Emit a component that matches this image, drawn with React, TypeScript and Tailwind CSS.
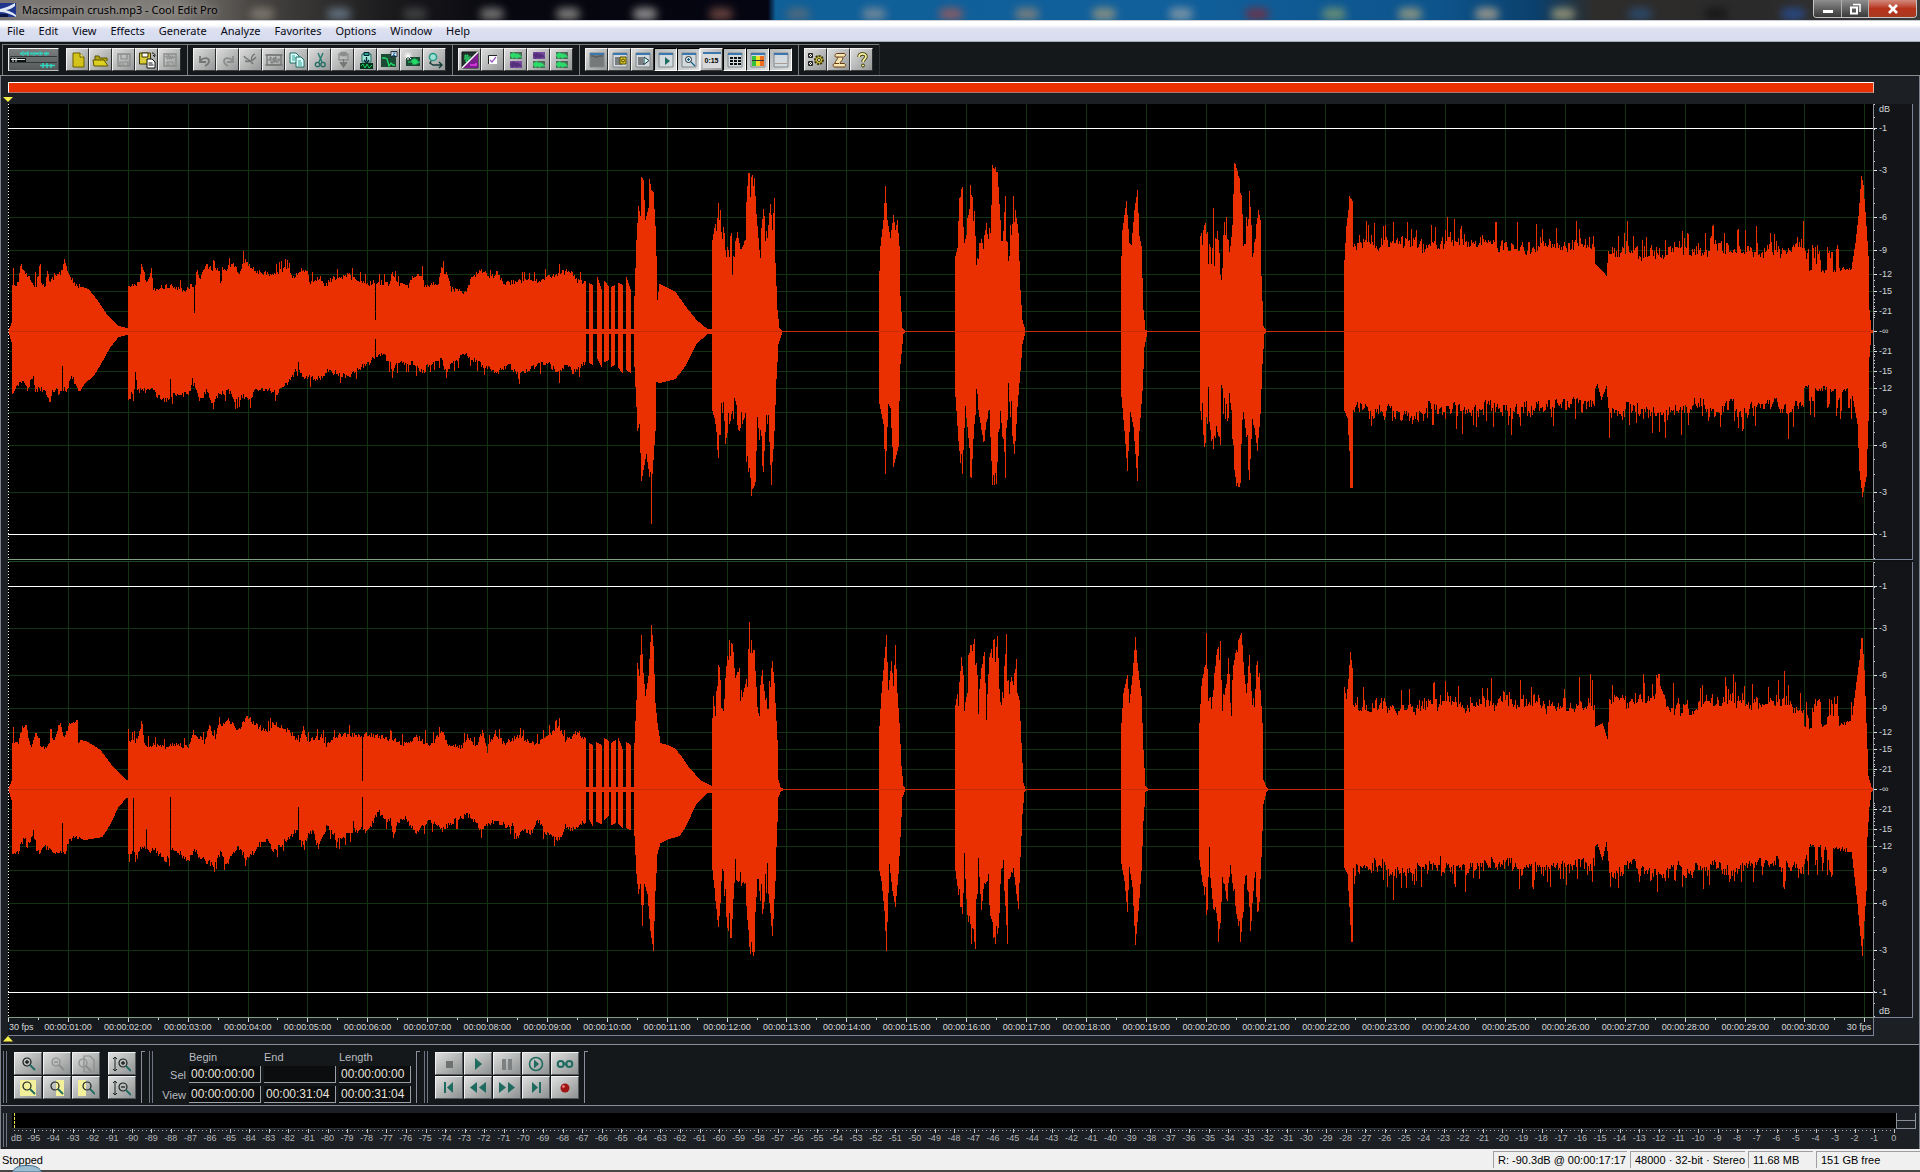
import React from "react";

/* ---------- waveform data: "x,amplitude" pairs, x on a 1920-wide timeline ---------- */

const L_UP = `8,0 11,8 12,46 13,63 14,46 18,48 20,66 24,62 30,50 34,46 35,62 36,46 40,68 41,45 45,43 47,63 49,50 51,52 57,58 62,60 64,72 67,62 69,53 78,45 88,42 96,32 106,17 118,5 126,3 127,3 128,45 139,50 141,67 143,62 146,48 151,62 153,43 169,47 184,42 192,47 193,45 194,18 195,45 196,63 200,55 206,67 212,63 219,62 220,50 224,63 233,67 240,60 243,72 249,66 259,60 273,58 286,64 293,55 302,62 306,63 310,50 320,55 324,45 331,53 347,57 367,48 374,50 375,11 376,50 389,48 391,59 398,47 408,47 412,55 422,57 424,45 438,50 441,65 445,60 451,43 465,40 471,55 484,62 490,53 496,60 504,47 518,52 531,50 547,55 569,62 577,52 585,50 586,2 588,2 589,48 592,46 593,2 596,2 597,54 601,42 602,2 603,2 604,50 608,45 609,2 610,2 611,44 614,46 615,2 617,2 618,48 622,46 623,2 625,2 626,54 630,42 631,2 633,2 634,35 636,91 638,125 640,115 641,154 643,151 645,111 648,123 649,152 651,141 653,139 655,105 656,75 657,31 659,47 667,43 675,39 685,25 696,11 707,2 711,2 712,91 715,108 716,100 718,128 721,120 725,91 729,78 731,113 732,60 734,88 737,101 741,81 745,92 746,131 748,159 754,156 756,115 759,85 763,123 767,95 770,130 772,103 774,133 775,68 777,21 779,3 782,0 878,0 879,60 880,85 883,111 885,145 887,111 890,93 893,116 895,101 897,111 899,85 900,35 902,3 905,0 954,0 955,75 957,83 959,135 962,145 965,95 970,146 974,121 976,66 980,98 983,85 985,113 988,95 991,126 992,167 997,160 1000,111 1003,101 1005,135 1008,71 1010,105 1013,136 1015,125 1018,98 1020,41 1022,11 1025,0 1120,0 1121,75 1122,101 1126,130 1129,88 1131,86 1134,121 1137,141 1139,95 1141,85 1143,21 1145,1 1147,0 1199,0 1200,95 1203,105 1206,116 1208,86 1211,86 1213,125 1214,88 1217,111 1220,60 1224,108 1226,113 1229,78 1232,108 1234,169 1238,158 1241,151 1243,85 1246,115 1249,138 1252,93 1255,103 1258,121 1260,111 1261,55 1263,5 1266,0 1343,0 1344,71 1346,105 1348,121 1349,135 1352,130 1353,84 1594,84 1595,67 1602,60 1606,55 1608,80 1803,82 1804,58 1851,62 1855,88 1858,115 1861,155 1863,146 1866,105 1868,75 1869,21 1871,1 1873,0`;

const L_DN = `8,0 11,10 12,62 18,53 24,48 27,58 33,43 35,58 45,58 49,72 53,57 59,61 61,60 62,33 63,57 67,60 71,42 78,62 84,52 94,43 100,33 110,15 118,5 126,3 127,3 128,68 134,60 135,42 137,58 141,61 151,58 157,65 165,70 169,66 170,48 171,64 180,62 188,65 192,50 200,70 206,60 213,75 218,62 231,61 233,70 245,65 250,68 255,60 269,58 276,62 286,53 294,42 298,34 302,48 310,47 322,48 327,40 347,45 359,37 369,32 374,27 375,7 376,27 382,22 391,35 392,47 394,35 398,32 412,32 422,42 429,33 441,27 446,45 451,33 465,23 478,32 498,42 508,33 518,45 531,37 547,32 559,43 565,32 573,42 584,33 585,30 586,2 588,2 589,31 592,33 593,2 596,2 597,27 601,35 602,2 603,2 604,30 608,28 609,2 610,2 611,35 614,33 615,2 617,2 618,36 622,41 623,2 625,2 626,38 630,41 631,2 633,2 634,35 636,75 637,99 639,92 641,149 646,122 649,145 650,140 651,192 652,142 655,99 656,50 660,51 675,47 685,34 696,12 707,2 711,2 712,79 715,92 718,129 723,69 725,112 729,92 732,82 736,95 741,100 745,82 746,132 751,162 755,152 757,85 760,122 763,139 766,82 769,112 771,151 774,99 776,47 778,12 782,0 878,0 879,72 883,92 885,142 888,72 890,76 893,135 898,115 899,69 900,32 903,2 905,0 954,0 955,65 959,122 962,145 965,73 968,108 970,165 973,109 976,70 979,84 983,112 985,113 989,82 992,154 996,150 1000,79 1005,144 1008,64 1014,125 1017,75 1020,39 1022,12 1025,0 1120,0 1121,65 1124,99 1127,139 1130,80 1133,95 1137,149 1139,99 1142,59 1144,15 1147,0 1199,0 1200,79 1205,124 1208,79 1213,129 1216,92 1220,122 1221,75 1227,92 1230,75 1233,122 1235,154 1240,154 1243,79 1246,108 1249,152 1252,85 1257,120 1260,82 1262,32 1264,2 1266,0 1343,0 1344,79 1347,86 1349,119 1350,156 1352,156 1353,78 1594,74 1595,56 1597,52 1601,68 1606,54 1608,76 1803,76 1804,55 1851,58 1857,92 1859,139 1862,165 1866,145 1868,89 1869,25 1871,1 1873,0`;

const R_UP = `8,0 11,8 12,46 13,62 14,46 18,44 22,63 25,65 31,43 36,58 41,43 49,43 50,62 53,49 60,66 63,51 69,63 77,68 78,49 86,48 100,39 112,23 126,9 127,9 128,60 129,48 137,51 141,68 143,46 155,44 163,42 171,46 188,43 193,59 200,51 204,48 209,67 214,51 218,63 229,70 237,59 247,73 255,66 267,58 273,68 286,61 294,54 298,46 303,64 307,49 322,54 325,44 339,56 355,56 361,55 362,8 363,55 367,56 384,53 404,46 416,53 424,48 425,62 426,47 429,46 443,58 447,46 461,43 467,54 475,43 482,59 486,46 487,36 488,44 495,58 504,46 518,54 535,46 559,63 565,49 577,58 585,51 586,2 588,2 589,46 592,44 593,2 595,2 596,47 601,44 602,2 603,2 604,51 608,48 609,2 610,2 611,46 615,49 616,2 617,2 618,51 622,40 623,2 625,2 626,47 630,44 631,2 633,2 634,46 636,89 637,126 639,113 641,154 643,116 645,93 648,113 651,164 653,143 655,86 657,66 660,46 667,44 675,40 680,34 689,21 700,9 711,3 712,71 713,93 715,74 717,124 719,124 722,79 725,113 727,136 730,154 733,139 735,111 739,121 742,93 747,118 749,167 750,148 754,148 757,83 762,118 765,89 769,106 771,141 774,106 775,86 777,49 778,9 780,2 783,0 878,0 879,63 881,96 883,119 886,154 888,99 891,128 893,103 895,144 897,96 899,66 901,23 903,3 905,0 954,0 955,84 959,106 962,144 964,81 967,99 968,133 970,146 974,149 977,113 978,91 981,123 984,138 986,78 989,133 993,149 997,156 1000,89 1003,106 1006,155 1008,109 1012,111 1016,128 1017,96 1019,89 1021,46 1023,6 1025,0 1120,0 1121,66 1123,96 1127,114 1129,86 1132,113 1135,152 1137,126 1139,109 1141,93 1143,39 1145,3 1148,0 1198,0 1199,66 1201,103 1204,123 1206,157 1208,89 1211,96 1214,116 1217,141 1220,151 1222,89 1226,106 1228,131 1231,93 1233,123 1237,149 1241,156 1244,116 1246,98 1249,134 1252,86 1255,103 1257,149 1260,99 1262,66 1263,9 1266,2 1268,0 1343,0 1344,102 1346,90 1348,110 1350,137 1352,121 1353,84 1589,84 1590,118 1591,86 1594,84 1595,62 1602,66 1607,50 1609,84 1655,88 1656,115 1660,104 1664,100 1667,84 1790,86 1803,78 1804,61 1851,66 1855,99 1859,129 1861,151 1862,151 1864,119 1866,66 1868,13 1871,2 1873,0`;

const R_DN = `8,0 11,10 12,64 18,61 24,47 27,58 33,42 37,64 47,56 53,64 61,62 62,36 63,62 65,62 69,51 77,47 84,50 102,47 110,34 118,17 126,8 127,8 128,64 129,72 132,60 133,8 134,62 135,72 137,61 145,60 146,38 147,62 155,62 165,72 169,68 170,7 171,60 176,62 188,72 194,61 200,69 213,76 220,64 226,76 237,57 247,71 259,56 267,51 273,64 282,54 294,44 297,42 298,17 299,50 301,56 312,42 318,59 327,36 337,52 352,43 353,32 355,42 361,40 362,7 363,40 367,44 378,22 384,32 390,31 393,49 398,32 404,29 416,44 429,32 443,41 449,34 469,26 480,41 494,32 506,37 513,36 516,51 522,41 531,44 537,31 545,44 559,51 565,37 571,41 585,33 586,2 588,2 589,30 592,36 593,2 595,2 596,32 601,34 602,2 603,2 604,30 608,26 609,2 610,2 611,35 615,33 616,2 617,2 618,34 622,38 623,2 625,2 626,38 630,40 631,2 633,2 634,46 636,84 638,104 640,94 642,136 644,94 647,104 650,141 653,161 655,101 657,64 660,53 669,49 679,46 685,37 696,14 707,3 711,3 712,80 718,141 722,91 727,137 731,150 734,91 739,94 745,97 749,166 754,164 757,91 762,124 767,97 772,146 775,91 776,57 778,7 780,2 783,0 878,0 879,81 881,91 884,121 886,161 889,74 892,101 895,117 898,84 900,47 902,7 905,0 954,0 955,81 959,111 962,132 964,74 967,127 970,151 975,157 978,77 982,132 985,94 987,91 991,141 995,153 998,141 1002,81 1004,101 1007,157 1008,91 1013,81 1018,119 1020,67 1022,24 1024,2 1026,0 1120,0 1121,74 1124,91 1127,122 1129,77 1132,97 1135,155 1138,121 1141,81 1143,31 1145,2 1148,0 1198,0 1199,70 1200,77 1204,107 1206,139 1209,81 1212,111 1216,137 1219,159 1222,87 1227,114 1230,77 1236,124 1240,153 1244,111 1246,84 1250,144 1254,87 1258,134 1261,67 1263,14 1266,2 1268,0 1343,0 1344,78 1347,84 1349,117 1351,152 1352,152 1353,78 1594,76 1595,56 1597,54 1602,70 1606,52 1609,80 1803,76 1804,55 1851,60 1857,114 1859,136 1862,166 1864,131 1866,101 1867,47 1869,17 1871,2 1873,0`;

const X0 = 8;
const WIDTH = 1865;
const HEIGHT = 455;
const MID = 227;

function parse(src: string): number[][] {
  return src.split(" ").map((p) => p.split(",").map(Number));
}

function hash(n: number): number {
  const s = Math.sin(n * 127.1 + 311.7) * 43758.5453;
  return s - Math.floor(s);
}

function jitter(x: number, seed: number): number {
  const r = hash(x + seed * 977);
  const r2 = hash(Math.floor(x / 3) + seed * 431);
  const r3 = hash(Math.floor(x / 14) + seed * 89);
  if (x > 14 && x < 80) return r * 6 - 3;
  if (x > 129 && x < 584) return r * 6 - 4 + (r > 0.93 ? 6 : 0);
  if ((x > 713 && x < 774) || (x > 957 && x < 1017) || (x > 1201 && x < 1259)) {
    return r > 0.72 ? -8 - r2 * 18 : r * 8 - 4;
  }
  if ((x > 1353 && x < 1594) || (x > 1608 && x < 1803)) {
    return r * r * 14 - 12 + r2 * 9 + r3 * 10 + (r > 0.9 ? 8 : 0) + (r > 0.985 ? 6 : 0);
  }
  if (x >= 1803 && x < 1852) return r2 > 0.4 ? 8 + r * 22 : r * 5 - 2;
  return 0;
}

function columns(src: string, seed: number): number[] {
  const pts = parse(src);
  const out: number[] = [];
  let k = 0;
  for (let x = X0; x < X0 + WIDTH; x++) {
    while (k < pts.length - 2 && pts[k + 1][0] <= x) k++;
    const [xa, a] = pts[k];
    const [xb, b] = pts[k + 1];
    const base = a + ((b - a) * (x - xa)) / (xb - xa);
    const noisy = base < 20 ? base : base + jitter(x, seed);
    out.push(Math.max(0, Math.round(noisy)));
  }
  return out;
}

function wavePath(up: string, dn: string, seed: number): string {
  const u = columns(up, seed);
  const d = columns(dn, seed + 1);
  let path = `M0 ${MID}`;
  u.forEach((v, i) => {
    path += `V${MID - v}H${i + 1}`;
  });
  for (let i = d.length - 1; i >= 0; i--) path += `V${MID + 1 + d[i]}H${i}`;
  return path + "Z";
}

const LEFT_PATH = wavePath(L_UP, L_DN, 3);
const RIGHT_PATH = wavePath(R_UP, R_DN, 11);

const SECOND = 59.88;
const SECONDS = Array.from({ length: 31 }, (_, i) => i + 1);
const LEVELS: [string, number][] = [
  ["-1", 203],
  ["-3", 161],
  ["-6", 114],
  ["-9", 81],
  ["-12", 57],
  ["-15", 40],
  ["-21", 20],
];

function Channel({ path, name }: { path: string; name: string }) {
  return (
    <svg
      role="img"
      aria-label={name}
      viewBox={`0 0 ${WIDTH} ${HEIGHT}`}
      preserveAspectRatio="none"
      className="block h-0 w-full min-h-0 flex-1 bg-black"
      shapeRendering="crispEdges"
    >
      {SECONDS.map((s) => (
        <rect key={s} x={Math.round(s * SECOND)} y={0} width={1} height={HEIGHT} fill="#123312" />
      ))}
      {LEVELS.slice(1).map(([l, a]) => (
        <g key={l} fill="#123312">
          <rect x={0} y={MID - a} width={WIDTH} height={1} />
          <rect x={0} y={MID + a} width={WIDTH} height={1} />
        </g>
      ))}
      <rect x={0} y={MID - 203} width={WIDTH} height={1} fill="#fff" />
      <rect x={0} y={MID + 203} width={WIDTH} height={1} fill="#fff" />
      <path d={path} fill="#ea2f00" />
      <rect x={0} y={MID} width={WIDTH} height={1} fill="#c62c06" />
      <path d={`M0 0V${HEIGHT}`} stroke="#fff" strokeWidth={2} strokeDasharray="1 2" />
    </svg>
  );
}

function minorTicks(): number[] {
  const out: number[] = [];
  for (let d = 0; d <= 24; d += d < 3 ? 0.5 : 1) out.push(Math.round(Math.pow(10, -d / 20) * 227));
  return out;
}
const MINOR = minorTicks();

function Scale({ db }: { db: "top" | "bottom" }) {
  const marks: [string, number][] = [["-∞", MID]];
  LEVELS.forEach(([l, a]) => marks.push([l, MID - a], [l, MID + a]));
  marks.push(["dB", db === "top" ? 5 : HEIGHT - 6]);
  return (
    <div className="relative min-h-0 flex-1 border-r border-[#7c8398] bg-[#121418]">
      <svg
        viewBox={`0 0 6 ${HEIGHT}`}
        preserveAspectRatio="none"
        className="absolute inset-y-0 left-0 h-full w-[6px]"
        shapeRendering="crispEdges"
        aria-hidden="true"
      >
        <rect width={1} height={HEIGHT} fill="#8b909a" />
        {MINOR.map((m, i) => (
          <g key={i} fill="#cfd2d6">
            <rect x={1} y={MID - m} width={1} height={1} />
            <rect x={1} y={Math.min(HEIGHT - 1, MID + m)} width={1} height={1} />
          </g>
        ))}
        {marks
          .filter(([l]) => l !== "dB")
          .map(([l, y]) => (
            <rect key={l + y} x={1} y={y} width={3} height={1} fill="#e4e6e8" />
          ))}
      </svg>
      {marks.map(([l, y]) => (
        <span
          key={l + y}
          className="absolute left-[6px] -translate-y-1/2 text-[9px] leading-[10px] text-[#d4d6d8]"
          style={{ top: `${(y / HEIGHT) * 100}%` }}
        >
          {l}
        </span>
      ))}
    </div>
  );
}

/* ---------- icons ---------- */

const G = "#8b8d8c";
const T = "#1f6b60";
const svg16 = { width: 18, height: 18, viewBox: "0 0 18 18", fill: "none", "aria-hidden": true } as const;

const wave = (c: string, y: number) => (
  <path d={`M3 ${y}h1v-2h1v4h1v-5h1v4h1v-3h1v4h1v-4h1v3h1v-2h1v2h2`} stroke={c} strokeWidth={1.2} />
);

function Win({ children, body = "#d3dbe0" }: { children?: React.ReactNode; body?: string }) {
  return (
    <>
      <path d="M2 2h14v14H2z" fill={body} stroke="#7f8488" />
      <path d="M2 2h14v2H2z" fill="#3c78ae" />
      {children}
    </>
  );
}

const I: Record<string, React.ReactNode> = {
  newFile: (
    <>
      <path d="M4 2h7l4 4v10H4z" fill="#d4c31a" stroke="#6b5f00" />
      <path d="M11 2v4h4" fill="#f5ef8e" stroke="#6b5f00" />
    </>
  ),
  open: (
    <>
      <path d="M3 14V5h4l1 2h7v3" fill="#b0a210" stroke="#5c5200" />
      <path d="M2 15l-1-6h11l4 6z" fill="#ded022" stroke="#5c5200" />
    </>
  ),
  save: (
    <>
      <path d="M3 3h12v12H3z" stroke={G} strokeWidth={1.4} />
      <path d="M6 3v5h6V3M5 15v-4h8v4M8 12v3" stroke={G} strokeWidth={1.2} />
    </>
  ),
  saveAs: (
    <>
      <path d="M1.5 2h11v11h-11z" fill="#d8cc3a" stroke="#3a3500" />
      <path d="M4 2h6v4H4z" fill="#fff" stroke="#3a3500" />
      <path d="M9 8h5l3 3v6H9z" fill="#fff" stroke="#111" />
      <path d="M10.5 12h4M10.500 14h5M14 2c2 0 3 1 3 3m-2-1l2 2" stroke="#111" />
    </>
  ),
  saveAll: (
    <>
      <path d="M3 3h12v12H3z" stroke={G} strokeWidth={1.4} />
      <path d="M4 6h1V5h1v3h1V4h1v4h1V5h1v3h1V5h1v2h1V6h1M6 15v-4h6v4M8 12v2" stroke={G} />
    </>
  ),
  undo: <path d="M4 5v6h6M4 11c2-5 9-5 9-1 0 2-2 4-4 5" stroke="#747676" strokeWidth={1.8} />,
  redo: <path d="M14 5v6H8M14 11c-2-5-9-5-9-1 0 2 2 4 4 5" stroke="#8b8d8d" strokeWidth={1.8} />,
  cutOff: <path d="M2 5c2 4 5 2 9 8m3-7c-4 5-8 5-11 4M13 3c-3 1-4 4-3 7" stroke="#777" strokeWidth={1.5} />,
  trim: (
    <>
      <path d="M2 4h14v10H2z" stroke="#777" strokeWidth={1.4} />
      <path d="M3 9h2V6h1v6h2V7h1v4h1V6h1v5h2V8h1v1h1M0 4h18M0 14h18" stroke="#777" />
    </>
  ),
  copy: (
    <>
      <path d="M2 2h6l3 3v7H2z" fill="#dff" stroke={T} />
      <path d="M8 6h5l3 3v7H8z" fill="#dff" stroke={T} />
      <path d="M4 5h3M4 7h4M4 9h3M10 10h3M10 12h4M10 14h4" stroke="#28a08c" />
    </>
  ),
  cut: (
    <>
      <path d="M7 2l4 9M12 2L8 11" stroke="#207a6c" strokeWidth={1.4} />
      <circle cx={6.5} cy={13.5} r={2.2} stroke={T} strokeWidth={1.3} />
      <circle cx={12} cy={13.5} r={2.2} stroke={T} strokeWidth={1.3} />
    </>
  ),
  pasteOff: (
    <>
      <path d="M5 3h9v6H5zM7 1.500h5v3H7z" stroke={G} strokeWidth={1.3} />
      <path d="M9.500 8v4M6 11.500h7l-3.500 5z" fill="#777" stroke="#777" />
    </>
  ),
  pasteNew: (
    <>
      <path d="M5 3h9v8H5z" fill="#9fe8d8" stroke={T} />
      <path d="M7 1.500h5v3H7z" fill="#28a08c" stroke="#023" />
      <path d="M9.500 6v4M7 9l2.500 3L12 9" stroke="#023" strokeWidth={1.3} />
      <path d="M3 12h13v6H3z" fill="#04331c" />
      <path d="M4 15l2-2 2 4 2-4 2 4 3-3" stroke="#19d25f" />
    </>
  ),
  clip: (
    <>
      <path d="M1 3h15v13H1z" fill="#1c4a34" />
      <path d="M2 7h3l2 1 2 7 2-3 2 2h2" stroke="#23dc68" strokeWidth={1.3} />
      <path d="M11 0.500h6v5h-6z" fill="#fff" stroke="#234" />
      <path d="M12.500 2h3l-3 2.500h3" stroke="#16609a" />
    </>
  ),
  sparkle: (
    <>
      <path d="M3 6h14v9H3z" fill="#1c4a34" />
      <path d="M5 11h4v-2h1v4h1V8h1v5h1v-4h1v3h1v-1h2" stroke="#23dc68" strokeWidth={1.2} />
      <path d="M5 1v8M1 5h8M2 2l6 6M8 2L2 8" stroke="#fff" />
    </>
  ),
  find: (
    <>
      <circle cx={7} cy={6} r={3.6} fill="#9fe0d4" stroke="#219784" strokeWidth={1.5} />
      <path d="M5 10l-1 2 3 2h9m-3-3l3 3-3 3" stroke="#143c38" strokeWidth={1.4} />
    </>
  ),
  split: (
    <>
      <path d="M1 1h16v16H1z" fill="#23302c" stroke="#111" />
      <path d="M17 1v16H1z" fill="#7a1c8c" />
      <path d="M3 8h1V4h1v7h1V4h1v5h1V6h2" stroke="#2be06c" />
      <path d="M17 1L1 17" stroke="#fff" strokeWidth={1.4} />
      <path d="M9 14h6v-2" stroke="#e83ce8" strokeWidth={1.5} />
    </>
  ),
  check: (
    <>
      <path d="M5 5h8v8H5z" fill="#fff" />
      <path d="M4.500 13V4.500H13" stroke="#222" />
      <path d="M6 9l2 2 4-5" stroke="#9a5cc0" strokeWidth={1.3} />
    </>
  ),
  chanA: (
    <>
      <path d="M3 1h12v7H3z" fill="#4d6656" />
      <path d="M3 10h12v7H3z" fill="#7a4aa0" />
      {wave("#2bdc6a", 5)}
      {wave("#54307a", 14)}
    </>
  ),
  chanB: (
    <>
      <path d="M3 1h12v7H3z" fill="#7a4aa0" />
      <path d="M3 10h12v7H3z" fill="#4d6656" />
      {wave("#54307a", 5)}
      {wave("#2bdc6a", 14)}
    </>
  ),
  chanC: (
    <>
      <path d="M3 1h12v7H3zM3 10h12v7H3z" fill="#4d6656" />
      {wave("#2bdc6a", 5)}
      {wave("#2bdc6a", 14)}
    </>
  ),
  winBlank: (
    <Win body="#75797a">
      <path d="M3 5h3l1 1h3l1-1h4" stroke="#4c5052" />
    </Win>
  ),
  winCue: (
    <Win>
      <path d="M4 7h5M4 9h5M4 11h5M4 13h7" stroke="#222" />
      <path d="M9 6h6v7H9z" fill="#d9c929" stroke="#554c00" />
      <circle cx={12} cy={9.5} r={1.5} stroke="#554c00" />
    </Win>
  ),
  winList: (
    <Win>
      <path d="M4 7h5M4 9h5M4 11h5M4 13h6" stroke="#222" />
      <path d="M10 6l5 3.500-5 4z" fill="#cfe" stroke="#234" />
    </Win>
  ),
  winPlay: (
    <Win>
      <path d="M8 6l5 4-5 4z" fill={T} />
    </Win>
  ),
  winZoom: (
    <Win>
      <circle cx={8.5} cy={8.5} r={3} fill="#e8f8ff" stroke="#222" />
      <path d="M7 8.500h3M8.500 7v3M11 11l4 4" stroke="#135a80" strokeWidth={1.2} />
    </Win>
  ),
  winMeter: (
    <Win>
      <path d="M4 7h3M8 7h3M12 7h3M4 10h3M8 10h3M12 10h3M4 13h3M8 13h3M12 13h3" stroke="#0c0c0c" strokeWidth={2} />
    </Win>
  ),
  winSpec: (
    <Win>
      <path d="M3 5h4v4H3zM3 10h4v5H3z" fill="#34c23c" />
      <path d="M7 5h4v4H7zM7 10h4v5H7z" fill="#f4e02c" />
      <path d="M11 5h4v4h-4zM11 10h4v5h-4z" fill="#ef6b22" />
      <path d="M3 9.500h12" stroke="#333" />
    </Win>
  ),
  winStatus: (
    <Win>
      <path d="M3 12.500h12" stroke="#a89c94" />
    </Win>
  ),
  options: (
    <>
      <path d="M1.500 2.500h4v4h-4zM1.500 10.500h4v4h-4z" fill="#fff" stroke="#222" />
      <path d="M2 3l3 3m0-3L2 6M2 11l3 3m0-3l-3 3" stroke="#222" strokeWidth={0.9} />
      <circle cx={12} cy={9} r={4} fill="#cdbf4a" stroke="#3d3700" strokeDasharray="2 1" strokeWidth={2} />
      <circle cx={12} cy={9} r={1.5} fill="#fff" stroke="#3d3700" />
    </>
  ),
  script: (
    <>
      <path
        d="M7 2.500h7c2 0 2 3 0 3l-1 1c0 3-3 4-3 6h4c2 0 2 3.500 0 3.500H5c-2.500 0-2.500-3.500 0-3.500 0-3 3-4 3-6.500H6c-2 0-1-3.500 1-3.500z"
        fill="#f6e6b4"
        stroke="#6a3c10"
      />
      <path d="M8 6h5M5 12.500h4" stroke="#6a3c10" />
    </>
  ),
  help: (
    <>
      <path d="M6 6c0-4 7-4 7-.500 0 2.500-3 2.500-3 5.500" stroke="#3c3800" strokeWidth={3.4} />
      <path d="M6 6c0-4 7-4 7-.500 0 2.500-3 2.500-3 5.500" stroke="#f3eda0" strokeWidth={1.8} />
      <circle cx={10} cy={14.5} r={1.5} fill="#f3eda0" stroke="#3c3800" />
    </>
  ),
};

function ToolButton({ icon, label, down }: { icon: string; label: string; down?: boolean }) {
  return (
    <button
      type="button"
      aria-label={label}
      className={
        down
          ? "flex h-[23px] w-[23px] items-center justify-center border border-t-black border-l-black border-r-white border-b-white bg-linear-to-br from-[#b4b8b8] to-[#dcdede]"
          : "flex h-[23px] w-[23px] items-center justify-center border border-t-[#f2f2f2] border-l-[#f2f2f2] border-r-[#2a2c2e] border-b-[#3a3c3e] bg-linear-to-br from-[#dcdcdc] to-[#969898]"
      }
    >
      {icon === "time" ? (
        <span className="flex h-[16px] w-[18px] items-center justify-center border-t-2 border-[#3c78ae] bg-[#d8dadb] text-[7px] leading-3 font-bold text-black">
          0:15
        </span>
      ) : (
        <svg {...svg16}>{I[icon]}</svg>
      )}
    </button>
  );
}

type Tool = [string, string, boolean?];
const TOOLS: Tool[][] = [
  [["newFile", "New"], ["open", "Open"], ["save", "Save"], ["saveAs", "Save As"], ["saveAll", "Save All"]],
  [
    ["undo", "Undo"],
    ["redo", "Redo"],
    ["cutOff", "Repeat last"],
    ["trim", "Trim"],
    ["copy", "Copy"],
    ["cut", "Cut"],
    ["pasteOff", "Paste"],
    ["pasteNew", "Paste to new"],
    ["clip", "Mix paste"],
    ["sparkle", "Convert sample type"],
    ["find", "Find beats"],
  ],
  [
    ["split", "Spectral view"],
    ["check", "Sync"],
    ["chanA", "Edit left channel"],
    ["chanB", "Edit right channel"],
    ["chanC", "Edit both channels"],
  ],
  [
    ["winBlank", "Organizer"],
    ["winCue", "Cue list"],
    ["winList", "Play list"],
    ["winPlay", "Transport", true],
    ["winZoom", "Zoom controls", true],
    ["time", "Time window"],
    ["winMeter", "Selection window", true],
    ["winSpec", "Level meters", true],
    ["winStatus", "Status bar", true],
  ],
  [["options", "Settings"], ["script", "Scripts"], ["help", "Help"]],
];

const MENU = ["File", "Edit", "View", "Effects", "Generate", "Analyze", "Favorites", "Options", "Window", "Help"];

/* ---------- lower panel ---------- */

function PadButton({ label, children }: { label: string; children: React.ReactNode }) {
  return (
    <button
      type="button"
      aria-label={label}
      className="flex h-[23px] w-[28px] items-center justify-center border border-t-[#f0f0f0] border-l-[#f0f0f0] border-r-[#55585a] border-b-[#55585a] bg-linear-to-br from-[#dedede] to-[#8f9292]"
    >
      <svg {...svg16}>{children}</svg>
    </button>
  );
}

function Lens({ x = 8, y = 7, c = "#1c2422", h = T, sign = "" }: { x?: number; y?: number; c?: string; h?: string; sign?: string }) {
  return (
    <>
      <circle cx={x} cy={y} r={4} stroke={c} strokeWidth={1.2} />
      <path d={`M${x + 3} ${y + 3}l5 5`} stroke={h} strokeWidth={1.8} />
      {sign && <path d={`M${x - 2} ${y}h4${sign === "+" ? `M${x} ${y - 2}v4` : ""}`} stroke={c} strokeWidth={1.3} />}
    </>
  );
}

const updown = <path d="M2 2v14M0 4l2-2 2 2M0 14l2 2 2-2" stroke="#1c2422" />;

function Grip() {
  return <div className="h-[52px] w-[4px] shrink-0 border-x border-[#6f7584]" />;
}

function EndCap() {
  return <div className="h-[52px] w-[4px] shrink-0 border-t border-l border-[#8a8f9a]" />;
}

function TimeField({ label, value }: { label: string; value: string }) {
  return (
    <input
      aria-label={label}
      defaultValue={value}
      className="h-[17px] w-[72px] border-r border-b border-[#9a9fa8] bg-[#0b0d0f] pl-[2px] text-[12px] leading-4 text-[#e6e4dc] outline-none"
    />
  );
}

const METER = Array.from({ length: 96 }, (_, i) => (i === 95 ? "0" : String(i - 95)));

const SPOTS = [
  "bg-[#8a8478]", "bg-[#6d7f90]", "bg-[#4a4b4c]", "bg-[#8d8d8a]", "bg-[#9a9a96]", "bg-[#b0b0ae]", "bg-[#7c5048]",
  "bg-[#5d6c78]", "bg-[#86909a]", "bg-[#a35a58]", "bg-[#8f8578]", "bg-[#a39a7c]", "bg-[#93a0a8]", "bg-[#7c2c3c]",
  "bg-[#7d9a70]", "bg-[#a8a480]", "bg-[#b8a890]", "bg-[#a8a480]", "bg-[#2c5078]", "bg-[#141414]", "bg-[#28509a]",
];

export default function App() {
  return (
    <div className="flex h-screen min-h-[640px] flex-col overflow-hidden bg-[#1b1e22] font-['Liberation_Sans',Arial,sans-serif] text-[11px]">
      {/* title bar */}
      <header className="relative flex h-[21px] shrink-0 items-center border-b border-[#c8ccd4] bg-[linear-gradient(90deg,#777472_0%,#807c78_9%,#4a4744_13%,#1c1c1e_20%,#07070f_26%,#050512_40%,#0f5f98_40.4%,#11609c_60%,#0d548c_75%,#0b406c_80%,#2e2d2c_83%,#2b2a2a_92%,#3c3c3c_100%)]">
        <div className="absolute inset-x-0 top-0 flex h-5 items-end justify-between overflow-hidden pr-[115px] pl-[250px]" aria-hidden="true">
          {SPOTS.map((c, i) => (
            <span key={i} className={`h-3 w-6 rounded-full opacity-80 blur-[4px] ${c}`} />
          ))}
        </div>
        <div className="relative flex flex-1 items-center gap-[5px]">
          <svg width="17" height="16" viewBox="0 0 17 16" aria-hidden="true">
            <path d="M0 1h16v14H0z" fill="#20368c" />
            <path d="M0 7C5 6 10 4 15 1v3C11 7 8 8 6 8c3 1 6 2 10 5v2C11 12 5 10 0 10z" fill="#dfe8f6" />
            <path d="M0 12h8v3H0z" fill="#0b1648" />
          </svg>
          <h1 className="font-['Noto_Sans','Open_Sans',sans-serif] text-[11px] leading-4 text-black [text-shadow:0_0_6px_rgba(255,255,255,0.5)]">
            Macsimpain crush.mp3 - Cool Edit Pro
          </h1>
        </div>
        <div className="relative mr-[3px] flex h-[18px] self-start overflow-hidden rounded-b-[4px] border border-t-0 border-[#c4c4c4] text-white">
          <button type="button" aria-label="Minimize" className="flex w-7 items-center justify-center border-r border-[#b0b0b0] bg-linear-to-b from-[#8f8f8f] to-[#3a3a3a]">
            <svg width="12" height="12" viewBox="0 0 12 12"><path d="M1 7h10v3H1z" fill="#fff" /></svg>
          </button>
          <button type="button" aria-label="Restore" className="flex w-[27px] items-center justify-center border-r border-[#b0b0b0] bg-linear-to-b from-[#8f8f8f] to-[#3a3a3a]">
            <svg width="12" height="12" viewBox="0 0 12 12" fill="none"><path d="M2 4.500h6v6H2z" stroke="#fff" strokeWidth="2" /><path d="M4 1.500h7V9" stroke="#fff" strokeWidth="1.5" /></svg>
          </button>
          <button type="button" aria-label="Close" className="flex w-[47px] items-center justify-center bg-linear-to-b from-[#d08a7c] via-[#b8321c] to-[#a83a20]">
            <svg width="12" height="12" viewBox="0 0 12 12"><path d="M2 2l8 8M10 2l-8 8" stroke="#fff" strokeWidth="2.6" /></svg>
          </button>
        </div>
      </header>

      {/* menu bar */}
      <nav className="flex h-[21px] shrink-0 items-end gap-[14px] border-b border-[#a8adb8] bg-linear-to-b from-white from-20% via-[#dde1f1] via-40% to-[#d6dbee] pb-px pl-[7px] font-['Noto_Sans','Open_Sans',sans-serif] text-[11px] leading-[18px] text-[#0a0a14]">
        {MENU.map((m) => (
          <button type="button" key={m}>{m}</button>
        ))}
      </nav>

      {/* toolbar */}
      <div role="toolbar" aria-label="Main toolbar" className="flex h-[34px] shrink-0 border-b border-[#8a8d90] bg-[#14181b] pt-[2px] pl-[2px]">
        {TOOLS.map((group, gi) => (
          <div key={gi} className="flex items-start border-t border-l border-[#7a7d80] pt-[3px] pr-[6px] pl-[5px]">
            {gi === 0 && (
              <button type="button" aria-label="Switch to multitrack" className="mr-[7px] flex h-[23px] w-[51px] items-center justify-center border border-t-[#f2f2f2] border-l-[#f2f2f2] border-r-[#3a3c3e] border-b-[#bfc2c2] bg-linear-to-b from-[#7a7f80] to-[#56595a]">
                <svg width="47" height="19" viewBox="0 0 47 19" fill="none" aria-hidden="true">
                  <path d="M0 6.500h47M0 12.500h47" stroke="#33383a" />
                  <path d="M0 8h16v4H0z" fill="#0c0f10" />
                  <path d="M10 3.500h30" stroke="#2fd6c0" strokeWidth="2" strokeDasharray="3 1 5 1" />
                  <path d="M13 1v5M18 1v5M24 2v4M30 1v5M36 2v4" stroke="#2fd6c0" />
                  <path d="M1 9.500h14M3 8v4M6 8v4" stroke="#e8ecec" />
                  <path d="M30 15.500h15M33 13v5M37 13v5M41 14v4" stroke="#2fd6c0" strokeWidth="1.5" />
                </svg>
              </button>
            )}
            {group.map(([icon, label, down]) => (
              <ToolButton key={icon} icon={icon} label={label} down={down} />
            ))}
          </div>
        ))}
        <div className="border-l border-[#2c3033]" />
      </div>

      {/* editor */}
      <main className="flex min-h-0 flex-1 flex-col border-x border-[#7d828c] bg-[#1c1f23]">
        <div className="mt-[6px] mr-[45px] ml-[7px] h-[11px] shrink-0 border border-[#e9b9aa] border-t-white border-l-white border-b-[#a8786a] bg-[#ea2f00]" aria-label="Visible range" role="img" />
        <div className="flex h-[11px] shrink-0 items-end pb-px pl-[2px]">
          <svg width="10" height="6" viewBox="0 0 10 6" aria-hidden="true"><path d="M0 0h10L5 5z" fill="#f6f04a" /></svg>
        </div>
        <div className="flex min-h-0 flex-1">
          <div className="ml-[7px] flex min-w-0 flex-1 flex-col bg-black">
            <Channel path={LEFT_PATH} name="Left channel waveform" />
            <div className="h-[3px] shrink-0 border-y border-t-[#7fa083] border-b-[#1c4a20]" />
            <Channel path={RIGHT_PATH} name="Right channel waveform" />
          </div>
          <div className="mr-[6px] flex w-[40px] shrink-0 flex-col">
            <Scale db="top" />
            <div className="h-[3px] shrink-0 border-t border-[#7c8398] bg-[#0e1012]" />
            <Scale db="bottom" />
          </div>
        </div>
        <div className="flex h-[19px] shrink-0">
          <div className="ml-[7px] min-w-0 flex-1 border-t border-r border-b border-t-[#7fa083] border-r-[#7c8398] border-b-[#7c8398] bg-[#15181c]">
            <svg viewBox="0 0 1865 4" preserveAspectRatio="none" className="block h-1 w-full" shapeRendering="crispEdges" aria-hidden="true">
              {Array.from({ length: 63 }, (_, i) => (
                <rect key={i} x={Math.round((i * SECOND) / 2)} y={0} width={1} height={i % 2 ? 2 : 4} fill="#d6d8da" />
              ))}
            </svg>
            <div className="flex text-[9px] leading-[11px] whitespace-nowrap text-[#d6d8da]">
              <span className="w-[30px] shrink-0 pl-px">30 fps</span>
              {SECONDS.slice(0, 30).map((s) => (
                <span key={s} className="min-w-0 flex-1 overflow-hidden text-center">
                  00:00:{String(s).padStart(2, "0")}:00
                </span>
              ))}
              <span className="w-[38px] shrink-0 pr-[2px] text-right">30 fps</span>
            </div>
          </div>
          <div className="w-[45px] shrink-0">
            <div className="mr-[6px] border-t border-[#7c8398]" />
          </div>
        </div>
        <div className="flex h-[9px] shrink-0 items-start border-b border-[#8a8d98] pl-[2px]">
          <svg width="10" height="6" viewBox="0 0 10 6" aria-hidden="true"><path d="M0 5.500h10L5 0z" fill="#f6f04a" /></svg>
        </div>

        {/* controls */}
        <div className="flex h-[61px] shrink-0 items-end border-b border-[#8a8d98] bg-[#14181b] pb-[2px] pl-[2px]">
          <Grip />
          <div className="mb-[4px] ml-[7px] flex h-[47px] gap-[8px]">
            <div className="grid grid-cols-3 gap-px">
              <PadButton label="Zoom in"><Lens sign="+" c="#141c1a" /></PadButton>
              <PadButton label="Zoom out"><Lens sign="-" c={G} h={G} /></PadButton>
              <PadButton label="Zoom full">
                <path d="M7 1h6l4 4v12H7z" stroke={G} strokeWidth={1.2} />
                <Lens x={6} y={8} c={G} h={G} />
              </PadButton>
              <PadButton label="Zoom to selection">
                <path d="M1 1h16v16H1z" fill="#f2f09a" />
                <Lens />
              </PadButton>
              <PadButton label="Zoom to left edge">
                <path d="M8 1h8v16H8z" fill="#f2f09a" />
                <Lens x={7} />
              </PadButton>
              <PadButton label="Zoom to right edge">
                <path d="M1 1h8v16H1z" fill="#f2f09a" />
                <Lens x={10} />
              </PadButton>
            </div>
            <div className="grid gap-px">
              <PadButton label="Zoom in vertically">{updown}<Lens x={10} y={8} sign="+" /></PadButton>
              <PadButton label="Zoom out vertically">{updown}<Lens x={10} y={8} sign="-" /></PadButton>
            </div>
          </div>
          <div className="ml-[5px] flex gap-[4px]"><EndCap /><Grip /></div>
          <div className="grid h-[53px] w-[261px] shrink-0 grid-cols-[27px_72px_72px_72px] grid-rows-[13px_17px_17px] content-start items-center gap-x-[3px] gap-y-[3px] pl-[6px] text-[11px] leading-3 text-[#b9bcc0]">
            <span />
            <span>Begin</span>
            <span>End</span>
            <span>Length</span>
            <span className="text-right">Sel</span>
            <TimeField label="Selection begin" value="00:00:00:00" />
            <TimeField label="Selection end" value="" />
            <TimeField label="Selection length" value="00:00:00:00" />
            <span className="text-right">View</span>
            <TimeField label="View begin" value="00:00:00:00" />
            <TimeField label="View end" value="00:00:31:04" />
            <TimeField label="View length" value="00:00:31:04" />
          </div>
          <div className="ml-[2px] flex gap-[4px]"><EndCap /><Grip /></div>
          <div className="mr-[5px] mb-[4px] ml-[7px] grid h-[47px] grid-cols-5 gap-px">
            <PadButton label="Stop"><path d="M6 6h7v7H6z" fill="#6f7273" /></PadButton>
            <PadButton label="Play"><path d="M6 3l7 6-7 6z" fill={T} /></PadButton>
            <PadButton label="Pause"><path d="M4 4h4v11H4zM10 4h4v11h-4z" fill="#7d8081" /></PadButton>
            <PadButton label="Play to end"><circle cx={9} cy={9} r={6.5} stroke={T} strokeWidth={1.6} /><path d="M7 4.500l5 4.500-5 4.500z" fill={T} /></PadButton>
            <PadButton label="Play looped"><circle cx={4.7} cy={9} r={3} stroke={T} strokeWidth={2} /><circle cx={13.3} cy={9} r={3} stroke={T} strokeWidth={2} /><path d="M7 7.500l4 3" stroke={T} strokeWidth={2} /></PadButton>
            <PadButton label="Go to beginning"><path d="M4 3h2v11H4zM13 3v11L7 8.500z" fill={T} /></PadButton>
            <PadButton label="Rewind"><path d="M8 3v11L1 8.500zM17 3v11l-7-5.500z" fill={T} /></PadButton>
            <PadButton label="Fast forward"><path d="M1 3l7 5.500L1 14zM10 3l7 5.500L10 14z" fill={T} /></PadButton>
            <PadButton label="Go to end"><path d="M12 3h2v11h-2zM5 3l6 5.500L5 14z" fill={T} /></PadButton>
            <PadButton label="Record"><circle cx={9} cy={9} r={4.5} fill="#a01414" /><circle cx={7.5} cy={7.5} r={1.3} fill="#e88" /></PadButton>
          </div>
          <EndCap />
        </div>

        {/* level meter */}
        <div className="flex h-[43px] shrink-0 gap-[4px] pt-[7px] pl-[2px]">
          <div className="h-[34px] w-[4px] shrink-0 border-x border-[#6f7584]" />
          <div className="min-w-0 flex-1">
            <div className="mr-[3px] ml-px flex h-[16px]">
              <div className="flex-1 border-b border-[#2c3034] bg-black pl-[2px]">
                <div className="h-full w-0 border-l border-dashed border-[#e6d84a]" />
              </div>
              <div className="w-[20px] border border-t-0 border-[#8a8f9a]"><div className="h-2 border-b border-[#8a8f9a]" /></div>
            </div>
            <svg viewBox="0 0 1908 4" preserveAspectRatio="none" className="block h-1 w-full" shapeRendering="crispEdges" aria-hidden="true">
              <path d="M3 1.5H1884" stroke="#b4b7ba" strokeWidth={1} strokeDasharray="1 3" />
              {METER.map((m, i) => (
                <rect key={m} x={Math.round(1883 - (95 - i) * 19.58)} y={0} width={1} height={4} fill="#c4c7ca" />
              ))}
            </svg>
            <div className="mr-[15px] flex text-[9px] leading-[11px] text-[#b4b7bb]">
              <span className="w-[13px] shrink-0">dB</span>
              {METER.map((m) => (
                <span key={m} className="min-w-0 flex-1 text-center">{m}</span>
              ))}
            </div>
          </div>
        </div>
      </main>

      {/* status bar */}
      <footer className="relative flex h-[23px] shrink-0 items-center gap-[3px] border-b-2 border-[#4a4644] bg-[#f0f0f0] text-[11px] leading-4 whitespace-nowrap text-black">
        <span className="flex-1 pl-[2px]">Stopped</span>
        <span className="h-[17px] w-[134px] border-t border-l border-[#a0a0a0] pl-1">R: -90.3dB @ 00:00:17:17</span>
        <span className="h-[17px] w-[115px] border-t border-l border-[#a0a0a0] pl-1">48000 · 32-bit · Stereo</span>
        <span className="h-[17px] w-[65px] border-t border-l border-[#a0a0a0] pl-1">11.68 MB</span>
        <span className="h-[17px] w-[104px] border-t border-l border-[#a0a0a0] pl-1">151 GB free</span>
        <svg className="absolute -bottom-[2px] left-[12px]" width="30" height="7" viewBox="0 0 30 7" aria-hidden="true">
          <path d="M0 7C4 1 9 .5 15 .5S26 1 30 7z" fill="#9dbdd2" stroke="#3a6484" />
        </svg>
      </footer>
    </div>
  );
}
